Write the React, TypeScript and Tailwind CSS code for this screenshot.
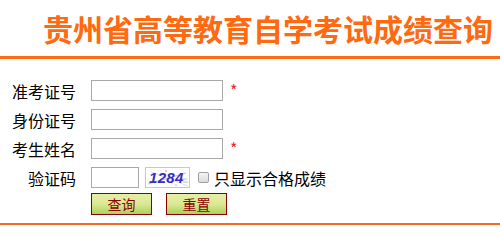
import React from "react";

const font = { fontFamily: '"Microsoft YaHei", "Noto Sans CJK SC", "Noto Sans", sans-serif' };

function Field({ label, children }: { label: string; children: React.ReactNode }) {
  return (
    <div className="flex h-[29px] items-center">
      <div className="w-[76px] text-right text-[16px] leading-none text-black">{label}</div>
      <div className="ml-[15px] flex items-center">{children}</div>
    </div>
  );
}

const inputCls = "h-[21px] border border-[#a9a9a9] bg-white px-1 text-[13px] outline-none";

function Required() {
  return <span className="ml-[7px] self-start pt-[2px] text-[16px] leading-none text-[#f0242a]">*</span>;
}

function Captcha() {
  return (
    <div className="relative ml-[6px] flex h-[21px] w-[45px] items-center overflow-hidden border border-[#c8c8c8] bg-white pl-[3px]">
      <svg className="absolute inset-0" width="45" height="21" viewBox="0 0 45 21">
        <path d="M2 16 L40 5" stroke="#b0b0d8" strokeWidth="0.8" fill="none" />
        <path d="M5 4 L42 18" stroke="#d0c0e0" strokeWidth="0.6" fill="none" />
        <path d="M35 11 h6 M37 14 h5" stroke="#a0a0a0" strokeWidth="0.7" />
        <circle cx="20" cy="3" r="0.7" fill="#e05050" />
        <circle cx="30" cy="17" r="0.6" fill="#5050e0" />
      </svg>
      <span className="relative text-[15px] font-bold italic leading-none tracking-[0.3px] text-[#3a2cc0]" style={{ fontFamily: '"Liberation Sans", Arial, sans-serif' }}>
        1284
      </span>
    </div>
  );
}

function Btn({ children }: { children: React.ReactNode }) {
  return (
    <button className="flex h-[22px] w-[61px] items-center justify-center border border-[#8b0000] bg-gradient-to-b from-[#e6eea8] via-[#dce893] to-[#a9d258] text-[14px] leading-none text-[#8b0000]">
      {children}
    </button>
  );
}

export default function App() {
  return (
    <div className="h-[233px] w-[500px] overflow-hidden bg-white" style={font}>
      <div className="h-[56px] pl-[43px] pt-[12px]">
        <h1 className="whitespace-nowrap text-[30px] font-bold leading-[32px] text-[#ff6a10]">贵州省高等教育自学考试成绩查询</h1>
      </div>
      <div className="h-[3px] bg-[#ff6a13]" />
      <div className="pt-[17px]">
        <Field label="准考证号">
          <input className={`${inputCls} w-[132px]`} />
          <Required />
        </Field>
        <Field label="身份证号">
          <input className={`${inputCls} w-[132px]`} />
        </Field>
        <Field label="考生姓名">
          <input className={`${inputCls} w-[132px]`} />
          <Required />
        </Field>
        <Field label="验证码">
          <input className={`${inputCls} w-[48px]`} />
          <Captcha />
          <span className="ml-[8px] h-[11px] w-[11px] rounded-[2px] border border-[#a0a0a0] bg-gradient-to-b from-[#f4f4f4] to-[#dcdcdc]" />
          <span className="ml-[5px] text-[16px] leading-none text-black">只显示合格成绩</span>
        </Field>
        <div className="ml-[91px] mt-[1px] flex gap-[14px]">
          <Btn>查询</Btn>
          <Btn>重置</Btn>
        </div>
      </div>
      <div className="mt-[8px] h-[2px] bg-[#f06a20]" />
    </div>
  );
}
